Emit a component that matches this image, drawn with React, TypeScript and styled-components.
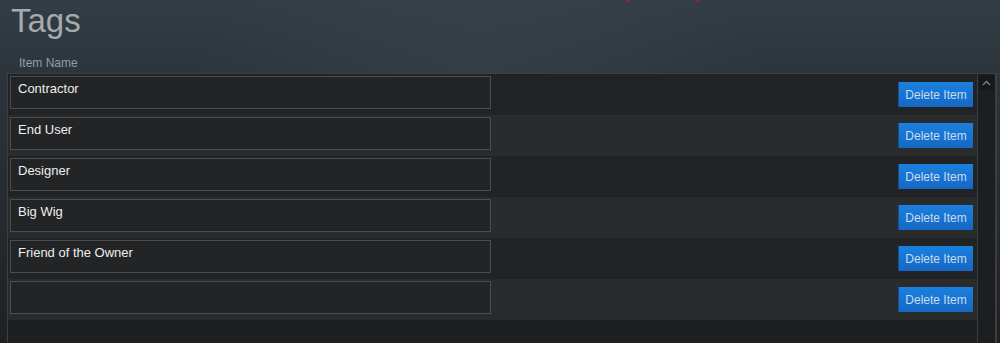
import styled, { createGlobalStyle } from "styled-components";

const GlobalStyle = createGlobalStyle`
  html, body {
    margin: 0;
    padding: 0;
    height: 100%;
  }
  body {
    font-family: "Liberation Sans", Arial, sans-serif;
    background: #1e2124;
    overflow: hidden;
  }
`;

const Page = styled.div`
  position: relative;
  width: 1000px;
  height: 343px;
  overflow: hidden;
  background:
    radial-gradient(ellipse 420px 300px at 480px 120px, rgba(70, 82, 92, 0.35), transparent 70%),
    linear-gradient(180deg, #323d45 0%, #2c353c 22%, #1e2124 100%);
`;

const Title = styled.h1`
  margin: 0;
  padding: 0 0 0 11px;
  height: 52px;
  font-size: 33px;
  font-weight: 400;
  line-height: 42px;
  color: #a5aaae;
`;

const ColumnLabel = styled.div`
  padding-left: 19px;
  height: 21px;
  font-size: 12px;
  line-height: 22px;
  color: #989ca0;
`;

const Panel = styled.div`
  display: flex;
  margin: 0 3px 0 7px;
  height: 275px;
  border: 1px solid #3d4043;
  border-bottom: none;
  background: #1d1f21;
`;

const List = styled.div`
  flex: 1;
  display: flex;
  flex-direction: column;
`;

const Row = styled.div<{ $alt: boolean }>`
  display: flex;
  align-items: flex-start;
  justify-content: space-between;
  height: 41px;
  padding: 0 4px 0 2px;
  box-sizing: border-box;
  background: ${(p) => (p.$alt ? "#2a2b2c" : "#212325")};
`;

const NameBox = styled.div`
  width: 481px;
  height: 33px;
  margin-top: 2px;
  box-sizing: border-box;
  border: 1px solid #4b4d4f;
  background: #232425;
  padding: 4px 0 0 7px;
  font-size: 13px;
  line-height: 15px;
  color: #eeeeee;
`;

const DeleteButton = styled.button`
  width: 75px;
  height: 25px;
  margin-top: 8px;
  border: none;
  border-left: 1px solid #0f4f96;
  background: linear-gradient(180deg, #1b80de 0%, #1568c4 100%);
  color: #c9dbef;
  font-family: "Liberation Sans", Arial, sans-serif;
  font-size: 12px;
  padding: 0;
  cursor: pointer;
`;

const Scrollbar = styled.div`
  width: 16px;
  border-left: 1px solid #3a3c3f;
  border-right: 1px solid #3a3c3f;
  background: #1c1e20;
  padding: 1px 0 0 1px;
  box-sizing: content-box;
`;

const ArrowBox = styled.div`
  width: 15px;
  height: 15px;
  background: #161819;
  display: flex;
  align-items: center;
  justify-content: center;
`;

const RedMark = styled.span<{ $left: number }>`
  position: absolute;
  top: 0;
  left: ${(p) => p.$left}px;
  width: 3px;
  height: 2px;
  background: #b31820;
`;

const items = ["Contractor", "End User", "Designer", "Big Wig", "Friend of the Owner", ""];

export default function App() {
  return (
    <>
      <GlobalStyle />
      <Page>
        <RedMark $left={626} />
        <RedMark $left={696} />
        <Title>Tags</Title>
        <ColumnLabel>Item Name</ColumnLabel>
        <Panel>
          <List>
            {items.map((name, i) => (
              <Row key={i} $alt={i % 2 === 1}>
                <NameBox>{name}</NameBox>
                <DeleteButton>Delete Item</DeleteButton>
              </Row>
            ))}
          </List>
          <Scrollbar>
            <ArrowBox>
              <svg width="9" height="6" viewBox="0 0 9 6">
                <path d="M1 5 L4.5 1.5 L8 5" stroke="#7c8085" strokeWidth="1.4" fill="none" />
              </svg>
            </ArrowBox>
          </Scrollbar>
        </Panel>
      </Page>
    </>
  );
}
